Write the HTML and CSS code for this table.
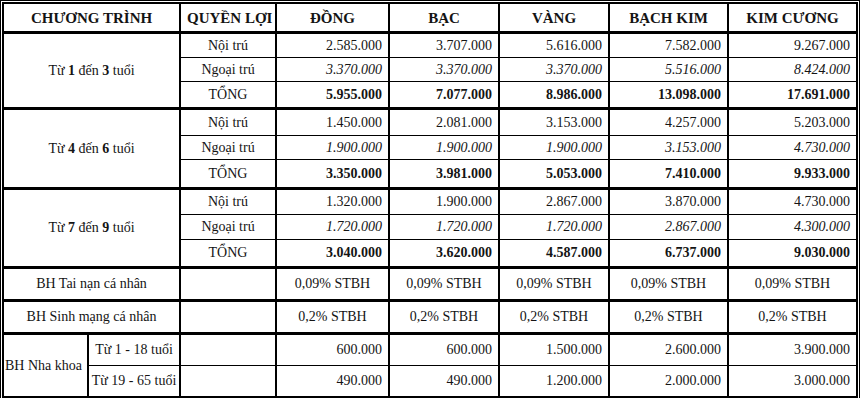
FILE: index.html
```html
<!DOCTYPE html>
<html lang="vi">
<head>
<meta charset="utf-8">
<title>Bảng quyền lợi</title>
<link rel="stylesheet" href="styles.css">
</head>
<body>
<table class="plan">
  <colgroup>
    <col class="c1a"><col class="c1b"><col class="c2">
    <col class="c3"><col class="c4"><col class="c5"><col class="c6"><col class="c7">
  </colgroup>
  <thead>
    <tr class="head">
      <th colspan="2">CHƯƠNG TRÌNH</th>
      <th>QUYỀN LỢI</th>
      <th>ĐỒNG</th>
      <th>BẠC</th>
      <th>VÀNG</th>
      <th>BẠCH KIM</th>
      <th>KIM CƯƠNG</th>
    </tr>
  </thead>
  <tbody>
    <tr class="grp r24">
      <td class="age" colspan="2" rowspan="3">Từ <b>1</b> đến <b>3</b> tuổi</td>
      <td class="ben">Nội trú</td>
      <td class="num">2.585.000</td><td class="num">3.707.000</td><td class="num">5.616.000</td><td class="num">7.582.000</td><td class="num">9.267.000</td>
    </tr>
    <tr class="r24 out">
      <td class="ben">Ngoại trú</td>
      <td class="num">3.370.000</td><td class="num">3.370.000</td><td class="num">3.370.000</td><td class="num">5.516.000</td><td class="num">8.424.000</td>
    </tr>
    <tr class="r27 tot">
      <td class="ben">TỔNG</td>
      <td class="num">5.955.000</td><td class="num">7.077.000</td><td class="num">8.986.000</td><td class="num">13.098.000</td><td class="num">17.691.000</td>
    </tr>

    <tr class="grp r27">
      <td class="age" colspan="2" rowspan="3">Từ <b>4</b> đến <b>6</b> tuổi</td>
      <td class="ben">Nội trú</td>
      <td class="num">1.450.000</td><td class="num">2.081.000</td><td class="num">3.153.000</td><td class="num">4.257.000</td><td class="num">5.203.000</td>
    </tr>
    <tr class="r24 out">
      <td class="ben">Ngoại trú</td>
      <td class="num">1.900.000</td><td class="num">1.900.000</td><td class="num">1.900.000</td><td class="num">3.153.000</td><td class="num">4.730.000</td>
    </tr>
    <tr class="r29 tot">
      <td class="ben">TỔNG</td>
      <td class="num">3.350.000</td><td class="num">3.981.000</td><td class="num">5.053.000</td><td class="num">7.410.000</td><td class="num">9.933.000</td>
    </tr>

    <tr class="grp r25">
      <td class="age" colspan="2" rowspan="3">Từ <b>7</b> đến <b>9</b> tuổi</td>
      <td class="ben">Nội trú</td>
      <td class="num">1.320.000</td><td class="num">1.900.000</td><td class="num">2.867.000</td><td class="num">3.870.000</td><td class="num">4.730.000</td>
    </tr>
    <tr class="r25 out">
      <td class="ben">Ngoại trú</td>
      <td class="num">1.720.000</td><td class="num">1.720.000</td><td class="num">1.720.000</td><td class="num">2.867.000</td><td class="num">4.300.000</td>
    </tr>
    <tr class="r28 tot">
      <td class="ben">TỔNG</td>
      <td class="num">3.040.000</td><td class="num">3.620.000</td><td class="num">4.587.000</td><td class="num">6.737.000</td><td class="num">9.030.000</td>
    </tr>

    <tr class="grp r34">
      <td class="lbl" colspan="2">BH Tai nạn cá nhân</td>
      <td></td>
      <td class="pct">0,09% STBH</td><td class="pct">0,09% STBH</td><td class="pct">0,09% STBH</td><td class="pct">0,09% STBH</td><td class="pct">0,09% STBH</td>
    </tr>
    <tr class="grp r33">
      <td class="lbl" colspan="2">BH Sinh mạng cá nhân</td>
      <td></td>
      <td class="pct">0,2% STBH</td><td class="pct">0,2% STBH</td><td class="pct">0,2% STBH</td><td class="pct">0,2% STBH</td><td class="pct">0,2% STBH</td>
    </tr>
    <tr class="grp r32">
      <td class="dental" rowspan="2">BH Nha khoa</td>
      <td class="sub">Từ 1 - 18 tuổi</td>
      <td></td>
      <td class="num">600.000</td><td class="num">600.000</td><td class="num">1.500.000</td><td class="num">2.600.000</td><td class="num">3.900.000</td>
    </tr>
    <tr class="r32">
      <td class="sub">Từ 19 - 65 tuổi</td>
      <td></td>
      <td class="num">490.000</td><td class="num">490.000</td><td class="num">1.200.000</td><td class="num">2.000.000</td><td class="num">3.000.000</td>
    </tr>
  </tbody>
</table>
</body>
</html>
```

FILE: styles.css
```css
html, body {
  margin: 0;
  padding: 0;
  background: #fff;
}

body {
  padding: 2px 0 0 2px;
  font-family: "Liberation Serif", "Times New Roman", serif;
  font-size: 14px;
  color: #141414;
}

.plan {
  border-collapse: collapse;
  table-layout: fixed;
  width: 856px;
  border: 2px solid #000;
  outline: 1px solid #000;
  outline-offset: 1px;
}

.c1a { width: 85px; }
.c1b { width: 92px; }
.c2 { width: 96px; }
.c3 { width: 113px; }
.c4 { width: 110px; }
.c5 { width: 110px; }
.c6 { width: 119px; }
.c7 { width: 129px; }

.plan th,
.plan td {
  border-top: 1px solid #000;
  border-bottom: 1px solid #000;
  border-left: 2px solid #000;
  border-right: 2px solid #000;
  padding: 0 6px;
  white-space: nowrap;
  overflow: hidden;
  line-height: 16px;
}

.head th {
  height: 27px;
  font-size: 15px;
  font-weight: bold;
  text-align: center;
  border-bottom: 2px solid #000;
  vertical-align: middle;
}

.grp td {
  border-top: 3px solid #000;
}

.r24 td { height: 23px; }
.r25 td { height: 24px; }
.r27 td { height: 25px; }
.r28 td { height: 26px; }
.r29 td { height: 27px; }
.r32 td { height: 30px; }
.r33 td { height: 30px; }
.r34 td { height: 30px; }

.age,
.lbl,
.ben,
.pct {
  text-align: center;
}

.plan .dental {
  text-align: left;
  padding: 0 0 0 1px;
  overflow: visible;
}

.plan .sub {
  text-align: center;
  padding: 0 1px;
}

.num {
  text-align: right;
  padding-right: 6px;
}

.out .num {
  font-style: italic;
}

.tot .num {
  font-weight: bold;
}
```
